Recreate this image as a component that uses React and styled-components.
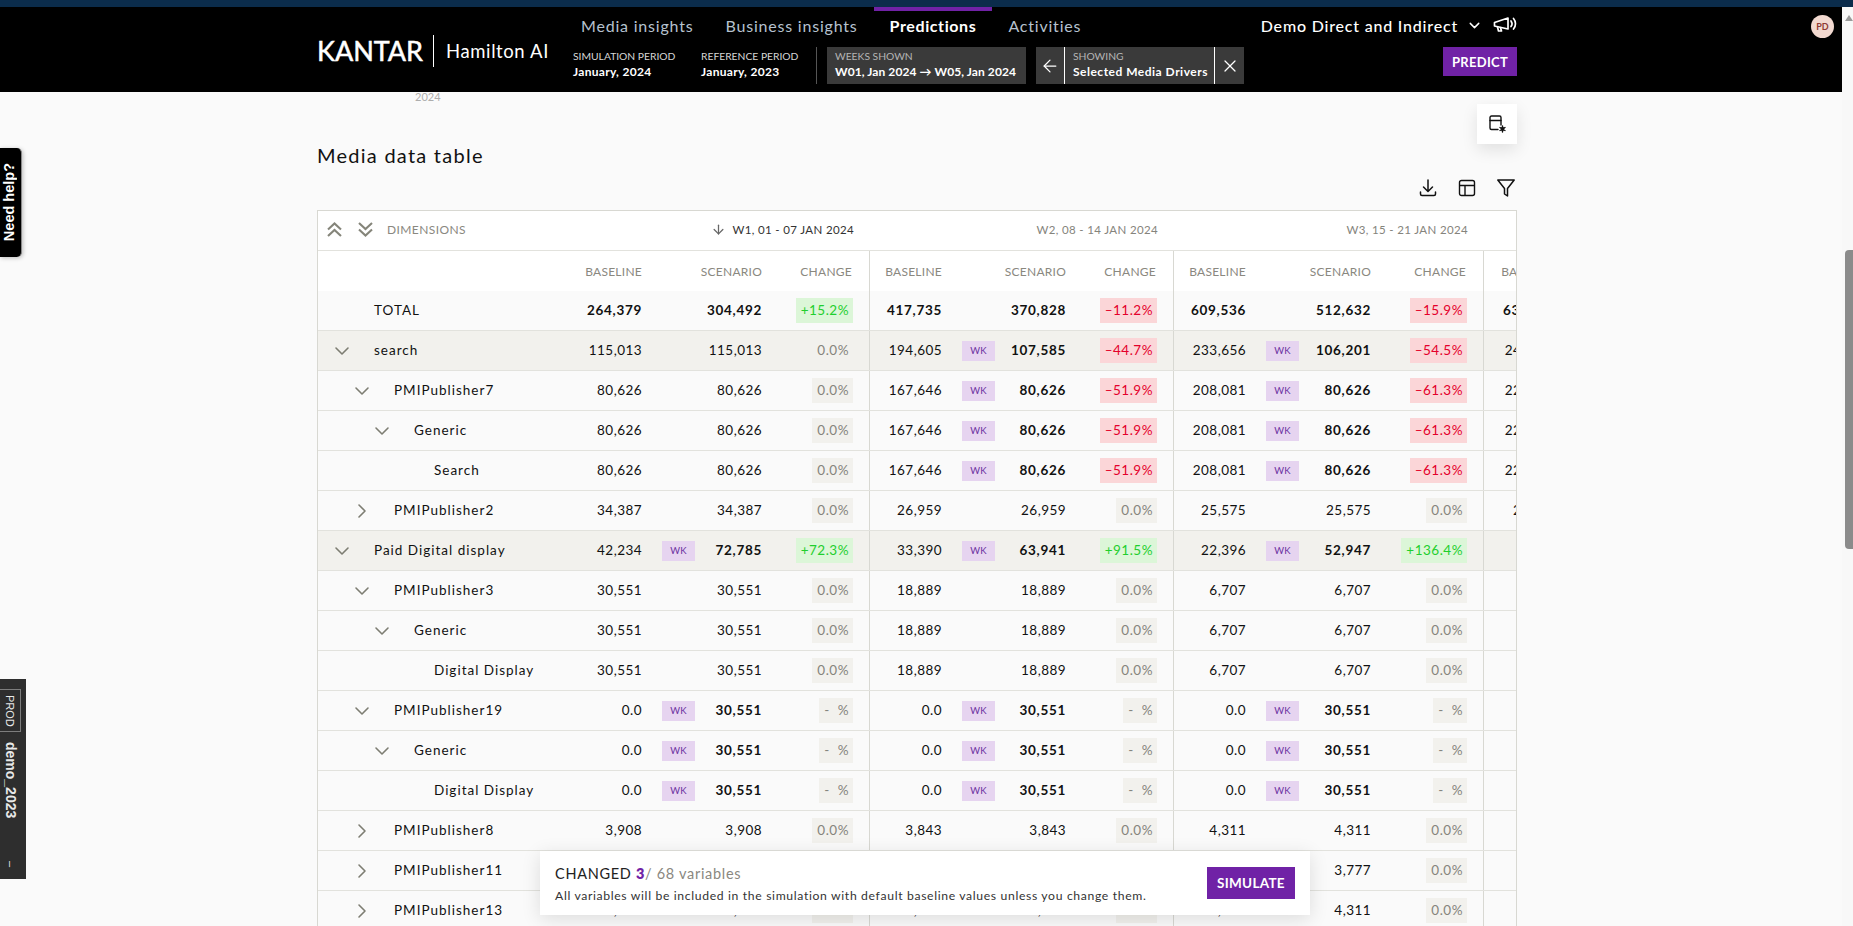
import React from "react";
import styled, { createGlobalStyle } from "styled-components";
import { ArrowDown, ArrowLeft, ChevronDown, ChevronRight, X } from "lucide-react";

const GlobalStyle = createGlobalStyle`
  html, body {
    margin: 0;
    padding: 0;
    height: 100%;
    overflow: hidden;
    background: #fafafa;
  }
  * { box-sizing: border-box; }
`;

const font = `"Lato", "Noto Sans", sans-serif`;
const purple = "#7022a6";
const columns = "252px 80px 120px 100px 80px 124px 100px 80px 125px 105px 82px";

const same = (a, b, c) => [[a, a, "0.0%"], [b, b, "0.0%"], [c, c, "0.0%"]];
const searchWeeks = [
  ["80,626", "80,626", "0.0%"],
  ["167,646", "80,626", "–51.9%", true],
  ["208,081", "80,626", "–61.3%", true],
];
const nilWeeks = [
  ["0.0", "30,551", "-  %", true],
  ["0.0", "30,551", "-  %", true],
  ["0.0", "30,551", "-  %", true],
];

const rows = [
  { label: "TOTAL", level: 0, total: true, next: "632,118", weeks: [["264,379", "304,492", "+15.2%"], ["417,735", "370,828", "–11.2%"], ["609,536", "512,632", "–15.9%"]] },
  { label: "search", level: 0, open: true, shaded: true, next: "240,550", weeks: [["115,013", "115,013", "0.0%"], ["194,605", "107,585", "–44.7%", true], ["233,656", "106,201", "–54.5%", true]] },
  { label: "PMIPublisher7", level: 1, open: true, next: "220,318", weeks: searchWeeks },
  { label: "Generic", level: 2, open: true, next: "220,318", weeks: searchWeeks },
  { label: "Search", level: 3, next: "220,318", weeks: searchWeeks },
  { label: "PMIPublisher2", level: 1, open: false, next: "20,232", weeks: same("34,387", "26,959", "25,575") },
  { label: "Paid Digital display", level: 0, open: true, shaded: true, weeks: [["42,234", "72,785", "+72.3%", true], ["33,390", "63,941", "+91.5%", true], ["22,396", "52,947", "+136.4%", true]] },
  { label: "PMIPublisher3", level: 1, open: true, weeks: same("30,551", "18,889", "6,707") },
  { label: "Generic", level: 2, open: true, weeks: same("30,551", "18,889", "6,707") },
  { label: "Digital Display", level: 3, weeks: same("30,551", "18,889", "6,707") },
  { label: "PMIPublisher19", level: 1, open: true, weeks: nilWeeks },
  { label: "Generic", level: 2, open: true, weeks: nilWeeks },
  { label: "Digital Display", level: 3, weeks: nilWeeks },
  { label: "PMIPublisher8", level: 1, open: false, weeks: same("3,908", "3,843", "4,311") },
  { label: "PMIPublisher11", level: 1, open: false, weeks: same("3,908", "3,843", "3,777") },
  { label: "PMIPublisher13", level: 1, open: false, weeks: same("3,908", "3,843", "4,311") },
];

const changeColors = {
  up: "background:#dcf6d8;color:#1fcf2e;",
  down: "background:#fbd6d8;color:#e4002b;",
  flat: "background:#f2f1ed;color:#85847c;",
};

const changeKind = (value) => {
  if (value.startsWith("+")) return "up";
  if (value.startsWith("–")) return "down";
  return "flat";
};

const Page = styled.div`
  position: relative;
  width: 100%;
  height: 926px;
  overflow: hidden;
  font-family: ${font};
  color: #111;
  background: #fafafa;
`;
const TopStripe = styled.div`
  height: 7px;
  background: #0b2c4b;
`;
const Body = styled.div`
  display: flex;
  height: 919px;
`;
const Main = styled.div`
  flex: 1;
  min-width: 0;
  overflow: hidden;
`;
const ScrollTrack = styled.div`
  position: relative;
  width: 11px;
  background: #f8f8f8;
`;
const ScrollArrow = styled.div`
  position: absolute;
  top: 8px;
  left: 3px;
  width: 0;
  height: 0;
  border-left: 4px solid transparent;
  border-right: 4px solid transparent;
  border-bottom: 6px solid #9a9a9a;
`;
const ScrollThumb = styled.div`
  position: absolute;
  top: 243px;
  left: 3px;
  width: 8px;
  height: 299px;
  border-radius: 4px 0 0 4px;
  background: #8b8b8b;
`;

const Header = styled.header`
  display: flex;
  height: 85px;
  padding-left: 317px;
  background: #000;
  color: #fff;
`;
const HeaderInner = styled.div`
  display: flex;
  flex: 0 0 1200px;
`;
const Brand = styled.div`
  display: flex;
  flex: 0 0 248px;
  align-items: center;
  padding-top: 2px;
`;
const BrandName = styled.span`
  font-size: 27px;
  font-weight: 400;
  line-height: 1;
  -webkit-text-stroke: 0.5px #fff;
`;
const BrandRule = styled.span`
  width: 1px;
  height: 32px;
  margin: 0 12px 0 10px;
  background: #fff;
`;
const BrandProduct = styled.span`
  font-size: 18.5px;
  letter-spacing: 0.6px;
  white-space: nowrap;
`;
const HeaderBody = styled.div`
  display: flex;
  flex: 1;
  flex-direction: column;
`;
const NavRow = styled.div`
  display: flex;
  align-items: flex-start;
  height: 40px;
`;
const NavItem = styled.a`
  display: flex;
  align-items: center;
  height: 38px;
  padding: 0 16px 6px;
  border-top: 4px solid ${(p) => (p.$active ? purple : "transparent")};
  color: ${(p) => (p.$active ? "#fff" : "#b6c2cf")};
  font-size: 16px;
  font-weight: ${(p) => (p.$active ? 700 : 400)};
  letter-spacing: ${(p) => (p.$active ? 0.6 : 0.8)}px;
  white-space: nowrap;
`;
const Project = styled.div`
  display: flex;
  align-items: center;
  height: 36px;
  margin-left: auto;
  font-size: 16px;
  font-weight: 500;
  letter-spacing: 0.8px;
  white-space: nowrap;
  svg { flex: none; }
`;
const ProjectChevron = styled(ChevronDown)`
  margin: 0 10px 0 8px;
`;
const ControlRow = styled.div`
  display: flex;
  height: 37px;
  padding-left: 8px;
`;
const Period = styled.div`
  display: flex;
  flex: 0 0 ${(p) => p.$width}px;
  flex-direction: column;
  justify-content: center;
  gap: 3px;
  padding-bottom: 3px;
`;
const SmallLabel = styled.span`
  color: ${(p) => p.$color || "#d6d6d6"};
  font-size: 10.3px;
  line-height: 12px;
  white-space: nowrap;
`;
const SmallValue = styled.span`
  font-size: 12px;
  font-weight: 700;
  letter-spacing: ${(p) => p.$spacing ?? 0.3}px;
  line-height: 14px;
  white-space: nowrap;
`;
const ControlRule = styled.span`
  width: 1px;
  margin-right: 10px;
  background: #555;
`;
const WeeksBox = styled.div`
  display: flex;
  flex: 0 0 199px;
  flex-direction: column;
  justify-content: center;
  gap: 3px;
  padding: 0 0 3px 8px;
  background: #3a3a3a;
`;
const ShowingBox = styled.div`
  display: flex;
  flex: 0 0 208px;
  margin-left: 10px;
  background: #3a3a3a;
`;
const ShowingIcon = styled.div`
  display: flex;
  flex: 0 0 ${(p) => p.$width}px;
  align-items: center;
  justify-content: center;
`;
const ShowingText = styled.div`
  display: flex;
  flex: 1;
  flex-direction: column;
  justify-content: center;
  gap: 3px;
  padding: 0 0 3px 8px;
  border-left: 1px solid #fff;
  border-right: 1px solid #fff;
`;
const PrimaryButton = styled.button`
  height: ${(p) => p.$height}px;
  padding: 0;
  border: 0;
  background: ${purple};
  color: #fff;
  font-family: ${font};
  font-weight: 700;
  letter-spacing: 0.3px;
`;
const PredictButton = styled(PrimaryButton)`
  width: 74px;
  margin-left: auto;
  font-size: 13px;
`;
const Avatar = styled.div`
  display: flex;
  flex: none;
  align-items: center;
  justify-content: center;
  width: 23px;
  height: 23px;
  margin: 8px 0 0 294px;
  border-radius: 50%;
  background: #f2d9d0;
  color: #8e3b34;
  font-size: 9px;
  font-weight: 700;
`;

const Content = styled.main`
  width: 1200px;
  margin-left: 317px;
`;
const StrayYear = styled.div`
  height: 12px;
  margin-left: 98px;
  color: #adadad;
  font-size: 11px;
  line-height: 10px;
`;
const FloatRow = styled.div`
  display: flex;
  justify-content: flex-end;
`;
const FloatButton = styled.div`
  display: flex;
  align-items: center;
  justify-content: center;
  width: 40px;
  height: 40px;
  background: #fff;
  box-shadow: 0 6px 16px rgba(0, 0, 0, 0.1);
`;
const Title = styled.h2`
  height: 24px;
  margin: 0 0 11px;
  font-size: 20px;
  font-weight: 400;
  letter-spacing: 1.25px;
  line-height: 22px;
`;
const Toolbar = styled.div`
  display: flex;
  justify-content: flex-end;
  gap: 21px;
  height: 18px;
  margin-bottom: 13px;
  padding-right: 2px;
`;

const Table = styled.section`
  overflow: hidden;
  width: 1200px;
  height: 720px;
  border: 1px solid #d8d8d2;
  border-bottom: 0;
`;
const GridRow = styled.div`
  display: grid;
  grid-template-columns: ${columns};
  width: 1248px;
  height: ${(p) => p.$height || 40}px;
  background: ${(p) => p.$bg || "#fafafa"};
  border-bottom: ${(p) => (p.$plain ? "0" : "1px solid #e2e2dd")};
`;
const CollapseCell = styled.div`
  display: flex;
  align-items: center;
  gap: 16px;
  padding: 0 0 2px 9px;
`;
const DimensionsLabel = styled.span`
  margin-left: -2px;
  color: #8a887f;
  font-size: 12px;
  letter-spacing: 0.4px;
`;
const WeekHead = styled.div`
  display: flex;
  grid-column: span 3;
  align-items: center;
  justify-content: flex-end;
  gap: 6px;
  padding: 0 16px 3px 0;
  color: ${(p) => (p.$sorted ? "#333" : "#85847c")};
  font-size: 11.5px;
  letter-spacing: 0.35px;
  white-space: nowrap;
  svg { color: #666; }
`;
const ColHead = styled.div`
  display: flex;
  align-items: center;
  justify-content: flex-end;
  padding-right: ${(p) => (p.$change ? 17 : 8)}px;
  border-right: ${(p) => (p.$change ? "1px solid #d8d8d2" : "0")};
  color: #8a887f;
  font-size: 12px;
  letter-spacing: 0.25px;
`;
const NameCell = styled.div`
  display: flex;
  align-items: center;
  padding-left: ${(p) => 12 + p.$level * 20}px;
  font-size: 13.5px;
  letter-spacing: 1px;
  white-space: nowrap;
`;
const NameText = styled.span`
  padding-bottom: 2px;
`;
const Twisty = styled.span`
  display: flex;
  flex: 0 0 44px;
  color: #7d7d72;
`;
const NumberCell = styled.div`
  display: flex;
  align-items: center;
  justify-content: space-between;
  padding: 0 8px 0 12px;
  font-size: 13.5px;
  font-weight: ${(p) => (p.$bold ? 700 : 400)};
  letter-spacing: ${(p) => (p.$bold ? 0.7 : 0.45)}px;
`;
const Value = styled.span`
  margin-left: auto;
  padding-bottom: 2px;
  white-space: nowrap;
`;
const WkTag = styled.span`
  display: flex;
  align-items: center;
  justify-content: center;
  width: 33px;
  height: 20px;
  background: #e6d4f0;
  color: #6b2fa0;
  font-size: 9.5px;
  font-weight: 400;
  letter-spacing: 0.2px;
`;
const ChangeCell = styled.div`
  display: flex;
  align-items: center;
  justify-content: flex-end;
  padding-right: 16px;
  border-right: 1px solid #d8d8d2;
`;
const ChangeBadge = styled.span`
  display: flex;
  align-items: center;
  height: 25px;
  padding: 0 4px 1px 5px;
  font-size: 13.5px;
  letter-spacing: 0.5px;
  white-space: pre;
  ${(p) => changeColors[p.$kind]}
`;

const SimulateBar = styled.aside`
  position: absolute;
  top: 851px;
  left: 540px;
  display: flex;
  align-items: center;
  justify-content: space-between;
  width: 770px;
  height: 64px;
  padding: 0 15px;
  background: #fff;
  box-shadow: 0 4px 18px rgba(0, 0, 0, 0.12);
`;
const SimulateText = styled.div`
  display: flex;
  flex-direction: column;
  gap: 6px;
  padding-top: 2px;
`;
const Changed = styled.div`
  color: #8a887f;
  font-size: 14.5px;
  letter-spacing: 0.7px;
  b { color: ${purple}; font-weight: 800; }
  span { color: #222; }
`;
const SimulateNote = styled.div`
  color: #333;
  font-size: 12.2px;
  letter-spacing: 0.65px;
  white-space: nowrap;
`;
const SimulateButton = styled(PrimaryButton)`
  width: 88px;
  font-size: 13.5px;
`;

const HelpTab = styled.div`
  position: absolute;
  top: 148px;
  left: 0;
  display: flex;
  align-items: center;
  justify-content: center;
  width: 22px;
  height: 109px;
  padding-right: 4px;
  border-radius: 0 5px 5px 0;
  border-right: 1px solid #888;
  background: #000;
  box-shadow: 1px 1px 4px rgba(0, 0, 0, 0.25);
  color: #fff;
  font-family: "Liberation Sans", sans-serif;
  font-size: 14.5px;
  font-weight: 700;
  writing-mode: vertical-rl;
  span { transform: rotate(180deg); white-space: nowrap; }
`;
const EnvTab = styled.div`
  position: absolute;
  top: 679px;
  left: 0;
  display: flex;
  align-items: center;
  width: 26px;
  height: 200px;
  padding-top: 10px;
  background: #2e2e2e;
  color: #e8e8e8;
  font-family: "Liberation Sans", sans-serif;
  writing-mode: vertical-rl;
`;
const EnvBadge = styled.span`
  display: flex;
  align-items: center;
  justify-content: center;
  width: 21px;
  height: 43px;
  margin-right: 5px;
  border: 1px solid #7d7d7d;
  border-left: 0;
  font-size: 11px;
`;
const EnvName = styled.span`
  margin: 10px 5px 0 0;
  font-size: 14px;
  font-weight: 700;
`;
const EnvDash = styled.span`
  margin: auto 5px 12px 0;
  font-size: 11px;
`;

const Megaphone = () => (
  <svg width="24" height="18" viewBox="0 0 24 18" fill="none" stroke="#fff" strokeWidth="1.7" strokeLinejoin="round" strokeLinecap="round">
    <path d="M1.5 6.5 15 2v11L1.5 10z" />
    <path d="M4.5 11l1 4h3l-1-3.3" />
    <path d="M18 5a4.5 4.5 0 0 1 0 5.5" />
    <path d="M20.5 2.5a8 8 0 0 1 0 10.5" />
  </svg>
);

const ConfigIcon = () => (
  <svg width="22" height="22" viewBox="0 0 22 22" fill="none" stroke="#111" strokeWidth="1.4" strokeLinecap="round">
    <path d="M12 16.5H5.5A1.5 1.5 0 0 1 4 15V4.5A1.5 1.5 0 0 1 5.5 3h8A1.5 1.5 0 0 1 15 4.5V12" />
    <path d="M4 7.5h11" />
    <path d="M16.5 13v6M14 14.5l5 3M19 14.5l-5 3" />
    <circle cx="16.5" cy="16" r="1.4" fill="#111" />
  </svg>
);

const DownloadIcon = () => (
  <svg width="18" height="18" viewBox="0 0 18 18" fill="none" stroke="#111" strokeWidth="1.5" strokeLinecap="round" strokeLinejoin="round">
    <path d="M9 1v11M4.5 8 9 12.5 13.5 8" />
    <path d="M1.5 13v2a1.5 1.5 0 0 0 1.5 1.5h12a1.5 1.5 0 0 0 1.5-1.5v-2" />
  </svg>
);

const TableIcon = () => (
  <svg width="18" height="18" viewBox="0 0 18 18" fill="none" stroke="#111" strokeWidth="1.4">
    <rect x="1.5" y="1.5" width="15" height="15" rx="2" />
    <path d="M1.5 6.5h15M7 6.5v10" />
  </svg>
);

const FunnelIcon = () => (
  <svg width="18" height="18" viewBox="0 0 18 18" fill="none" stroke="#111" strokeWidth="1.5" strokeLinejoin="round">
    <path d="M.8 1h16.4L10.5 9.5V17l-3-2V9.5z" />
  </svg>
);

const DoubleChevron = ({ down }) => (
  <svg width="15" height="15" viewBox="0 0 15 15" fill="none" stroke="#85857a" strokeWidth="2.1" style={down ? { transform: "scaleY(-1)" } : undefined}>
    <path d="M1 7.5 7.5 1.5 14 7.5" />
    <path d="M1 14 7.5 8 14 14" />
  </svg>
);

const DataRow = ({ row }) => (
  <GridRow $bg={row.shaded ? "#f2f1ed" : undefined}>
    <NameCell $level={row.level}>
      <Twisty>
        {row.open === true && <ChevronDown size={24} strokeWidth={1.6} />}
        {row.open === false && <ChevronRight size={24} strokeWidth={1.6} />}
      </Twisty>
      <NameText>{row.label}</NameText>
    </NameCell>
    {row.weeks.map(([base, scenario, change, wk], i) => (
      <React.Fragment key={i}>
        <NumberCell $bold={row.total}>
          <Value>{base}</Value>
        </NumberCell>
        <NumberCell $bold={row.total || wk}>
          {wk && <WkTag>WK</WkTag>}
          <Value>{scenario}</Value>
        </NumberCell>
        <ChangeCell>
          <ChangeBadge $kind={changeKind(change)}>{change}</ChangeBadge>
        </ChangeCell>
      </React.Fragment>
    ))}
    <NumberCell $bold={row.total}>
      <Value>{row.next}</Value>
    </NumberCell>
  </GridRow>
);

const App = () => (
  <Page>
    <GlobalStyle />
    <TopStripe />
    <Body>
      <Main>
        <Header>
          <HeaderInner>
            <Brand>
              <BrandName>KANTAR</BrandName>
              <BrandRule />
              <BrandProduct>Hamilton AI</BrandProduct>
            </Brand>
            <HeaderBody>
              <NavRow>
                <NavItem>Media insights</NavItem>
                <NavItem>Business insights</NavItem>
                <NavItem $active>Predictions</NavItem>
                <NavItem>Activities</NavItem>
                <Project>
                  Demo Direct and Indirect
                  <ProjectChevron size={17} />
                  <Megaphone />
                </Project>
              </NavRow>
              <ControlRow>
                <Period $width={128}>
                  <SmallLabel>SIMULATION PERIOD</SmallLabel>
                  <SmallValue>January, 2024</SmallValue>
                </Period>
                <Period $width={115}>
                  <SmallLabel>REFERENCE PERIOD</SmallLabel>
                  <SmallValue>January, 2023</SmallValue>
                </Period>
                <ControlRule />
                <WeeksBox>
                  <SmallLabel $color="#b5b5b5">WEEKS SHOWN</SmallLabel>
                  <SmallValue $spacing={0.08}>W01, Jan 2024 → W05, Jan 2024</SmallValue>
                </WeeksBox>
                <ShowingBox>
                  <ShowingIcon $width={28}>
                    <ArrowLeft size={20} strokeWidth={1.5} />
                  </ShowingIcon>
                  <ShowingText>
                    <SmallLabel $color="#b5b5b5">SHOWING</SmallLabel>
                    <SmallValue $spacing={0.5}>Selected Media Drivers</SmallValue>
                  </ShowingText>
                  <ShowingIcon $width={29}>
                    <X size={20} strokeWidth={1.5} />
                  </ShowingIcon>
                </ShowingBox>
                <PredictButton $height={29}>PREDICT</PredictButton>
              </ControlRow>
            </HeaderBody>
          </HeaderInner>
          <Avatar>PD</Avatar>
        </Header>
        <Content>
          <StrayYear>2024</StrayYear>
          <FloatRow>
            <FloatButton>
              <ConfigIcon />
            </FloatButton>
          </FloatRow>
          <Title>Media data table</Title>
          <Toolbar>
            <DownloadIcon />
            <TableIcon />
            <FunnelIcon />
          </Toolbar>
          <Table>
            <GridRow $bg="#fff">
              <CollapseCell>
                <DoubleChevron />
                <DoubleChevron down />
                <DimensionsLabel>DIMENSIONS</DimensionsLabel>
              </CollapseCell>
              <WeekHead $sorted>
                <ArrowDown size={15} />
                W1, 01 - 07 JAN 2024
              </WeekHead>
              <WeekHead>W2, 08 - 14 JAN 2024</WeekHead>
              <WeekHead>W3, 15 - 21 JAN 2024</WeekHead>
            </GridRow>
            <GridRow $bg="#fff" $plain>
              <div />
              {[0, 1, 2].map((week) => (
                <React.Fragment key={week}>
                  <ColHead>BASELINE</ColHead>
                  <ColHead>SCENARIO</ColHead>
                  <ColHead $change>CHANGE</ColHead>
                </React.Fragment>
              ))}
              <ColHead>BASELINE</ColHead>
            </GridRow>
            {rows.map((row, i) => (
              <DataRow key={i} row={row} />
            ))}
          </Table>
        </Content>
      </Main>
      <ScrollTrack>
        <ScrollArrow />
        <ScrollThumb />
      </ScrollTrack>
    </Body>
    <HelpTab>
      <span>Need help?</span>
    </HelpTab>
    <EnvTab>
      <EnvBadge>PROD</EnvBadge>
      <EnvName>demo_2023</EnvName>
      <EnvDash>–</EnvDash>
    </EnvTab>
    <SimulateBar>
      <SimulateText>
        <Changed>
          <span>CHANGED </span>
          <b>3</b>/ 68 variables
        </Changed>
        <SimulateNote>All variables will be included in the simulation with default baseline values unless you change them.</SimulateNote>
      </SimulateText>
      <SimulateButton $height={32}>SIMULATE</SimulateButton>
    </SimulateBar>
  </Page>
);

export default App;
